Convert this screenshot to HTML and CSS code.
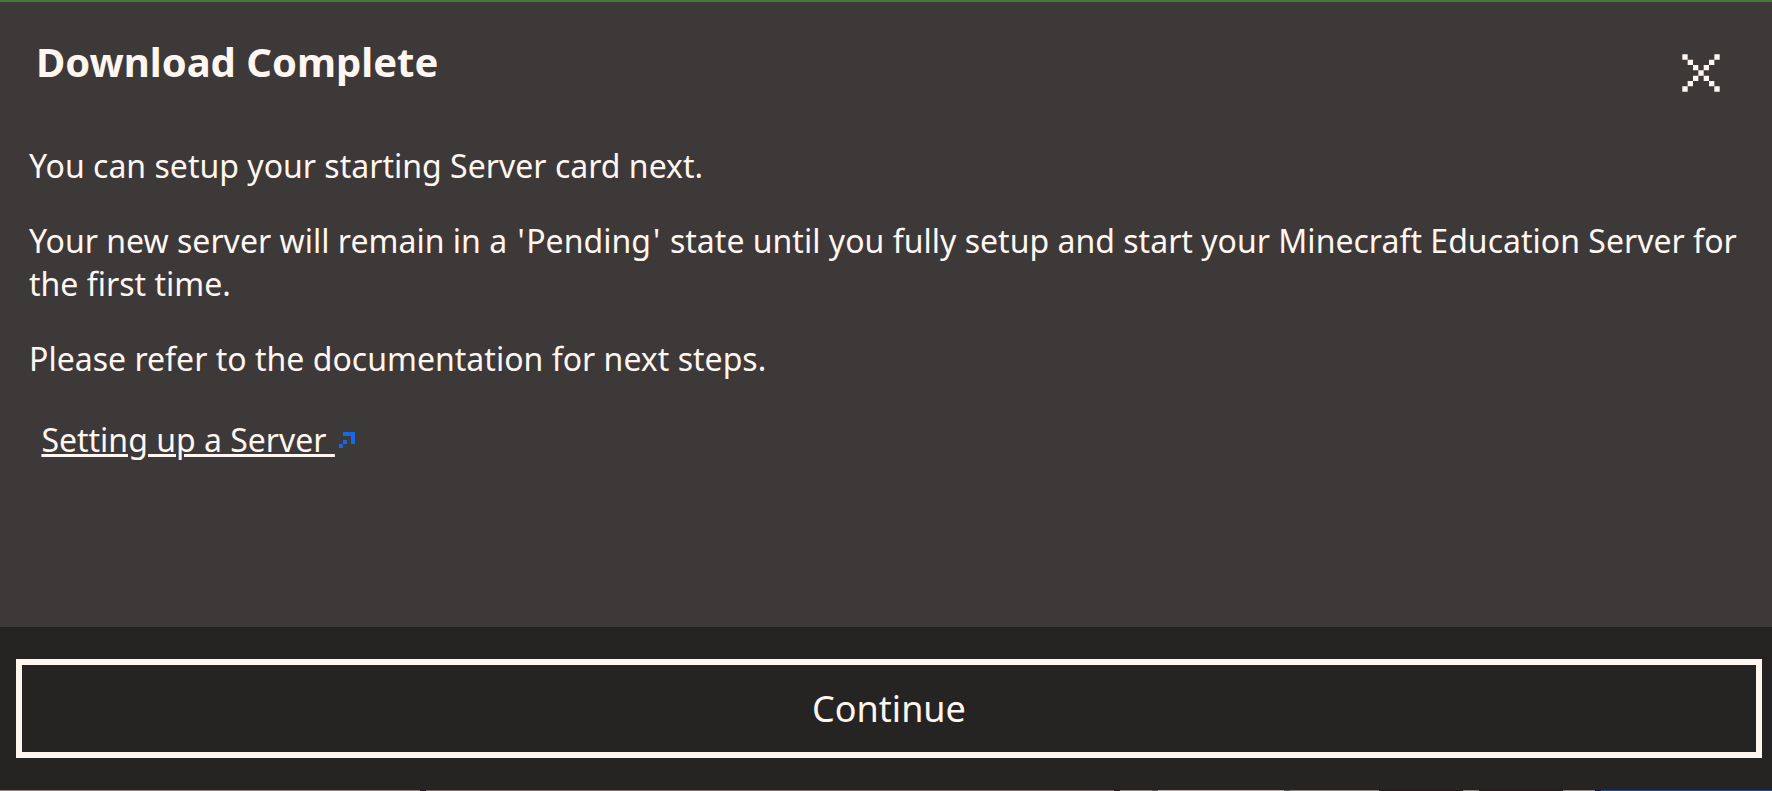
FILE: index.html
```
<!DOCTYPE html>
<html lang="en"><head><meta charset="utf-8"><title>Download Complete</title><link rel="stylesheet" href="styles.css"></head>
<body><main class="dialog">
<header class="header"><h1 class="title">Download Complete</h1>
<button class="close" aria-label="Close"><svg width="38" height="38" viewBox="-.06 -.06 7.12 7.12"><path fill="#fff6f2" d="M0 0h1v1H0zM1 1h1v1H1zM2 2h1v1H2zM3 3h1v1H3zM4 4h1v1H4zM5 5h1v1H5zM6 6h1v1H6zM6 0h1v1H6zM5 1h1v1H5zM4 2h1v1H4zM2 4h1v1H2zM1 5h1v1H1zM0 6h1v1H0z"/></svg></button></header>
<section class="content"><p>You can setup your starting Server card next.</p>
<p>Your new server will remain in a <span class="quote">'</span>Pending<span class="quote">'</span> state until you fully setup and start your Minecraft Education Server for the first time.</p>
<p>Please refer to the documentation for next steps.</p>
<a class="link" href="#"><span class="label">Setting up a Server&nbsp;</span><svg class="ext" width="16" height="16" viewBox="0 0 4 4" shape-rendering="crispEdges"><path fill="#1668e3" d="M1 0h3v3H3V1H1zM1 2h1v1H1zM0 3h1v1H0z"/></svg></a></section>
<footer class="footer"><button class="continue">Continue</button></footer>
<div class="edge"></div>
</main></body></html>
```
FILE: styles.css
```
*{box-sizing:border-box}
body{margin:0;background:#3d3938;color:#fff6f2;font-family:"Noto Sans",sans-serif}
.dialog{height:791px;border-top:2px solid #437a38;display:flex;flex-direction:column}
.header{display:flex;justify-content:space-between;padding:32px 52px 0 36px;height:123px}
.title{margin:0;font-size:40px;line-height:56px;font-weight:700}
.close{margin:20px 0 0;padding:0;border:0;background:none;width:38px;height:38px}
.close svg{display:block}
.content{flex:1;padding:19px 29px 0;font-size:32px;line-height:43px}
.content p{margin:0 -5px 32px 0;letter-spacing:.015px}
.quote{margin:0 1.5px 0 2px}
.link{display:flex;align-items:center;margin:38px 0 0 12.4px;color:#fff6f2;text-decoration:none}
.label{text-decoration:underline;text-decoration-thickness:3px;text-underline-offset:2px}
.ext{margin-left:4.2px}
.footer{height:163px;background:#252422;padding:32px 10px 32px 16px}
.continue{display:block;width:100%;height:99px;border:6px solid #fff6f0;background:transparent;color:#fff6f2;font:36px "Noto Sans",sans-serif}
.edge{height:1px;background:linear-gradient(90deg,#8e8580 0 420px,#251b1c 420px 426px,#7b726d 426px 1114px,#251b1c 1114px 1120px,#8e8684 1120px 1152px,#625a58 1152px 1158px,#b6adab 1158px 1284px,#625a58 1284px 1290px,#8e8684 1290px 1379px,#251b1c 1379px 1463px,#8e8684 1463px 1479px,#251b1c 1479px 1563px,#8e8684 1563px 1595px,#0a1050 1595px 1601px,#20508c 1601px)}
```
